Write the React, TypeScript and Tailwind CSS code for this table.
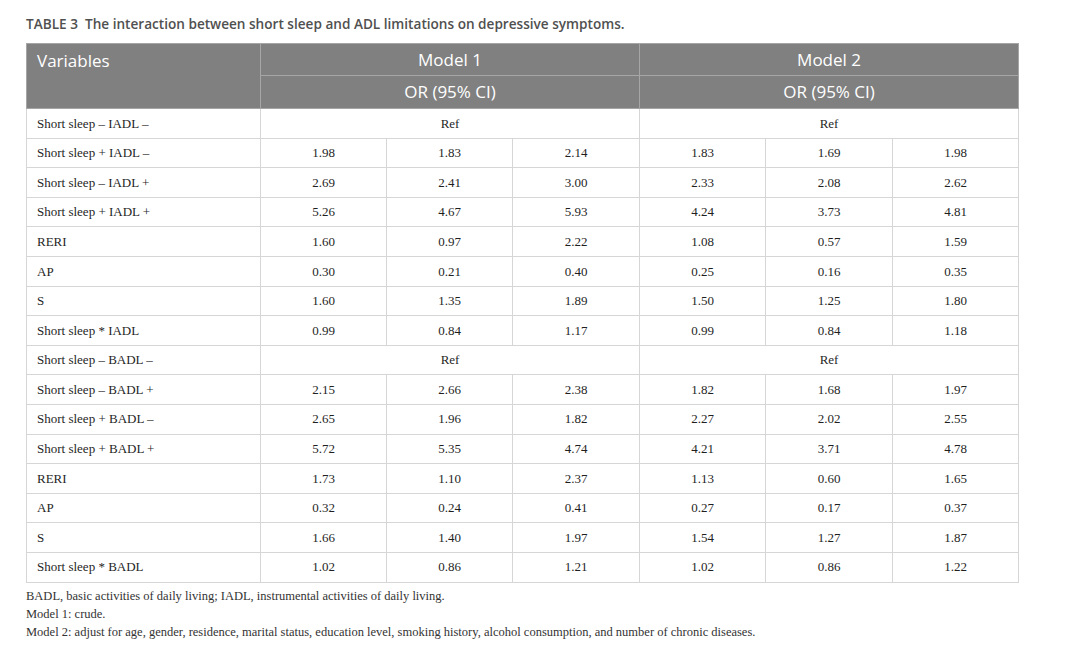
const rows: { label: string; ref?: boolean; m1?: string[]; m2?: string[] }[] = [
  { label: 'Short sleep – IADL –', ref: true },
  { label: 'Short sleep + IADL –', m1: ['1.98', '1.83', '2.14'], m2: ['1.83', '1.69', '1.98'] },
  { label: 'Short sleep – IADL +', m1: ['2.69', '2.41', '3.00'], m2: ['2.33', '2.08', '2.62'] },
  { label: 'Short sleep + IADL +', m1: ['5.26', '4.67', '5.93'], m2: ['4.24', '3.73', '4.81'] },
  { label: 'RERI', m1: ['1.60', '0.97', '2.22'], m2: ['1.08', '0.57', '1.59'] },
  { label: 'AP', m1: ['0.30', '0.21', '0.40'], m2: ['0.25', '0.16', '0.35'] },
  { label: 'S', m1: ['1.60', '1.35', '1.89'], m2: ['1.50', '1.25', '1.80'] },
  { label: 'Short sleep * IADL', m1: ['0.99', '0.84', '1.17'], m2: ['0.99', '0.84', '1.18'] },
  { label: 'Short sleep – BADL –', ref: true },
  { label: 'Short sleep – BADL +', m1: ['2.15', '2.66', '2.38'], m2: ['1.82', '1.68', '1.97'] },
  { label: 'Short sleep + BADL –', m1: ['2.65', '1.96', '1.82'], m2: ['2.27', '2.02', '2.55'] },
  { label: 'Short sleep + BADL +', m1: ['5.72', '5.35', '4.74'], m2: ['4.21', '3.71', '4.78'] },
  { label: 'RERI', m1: ['1.73', '1.10', '2.37'], m2: ['1.13', '0.60', '1.65'] },
  { label: 'AP', m1: ['0.32', '0.24', '0.41'], m2: ['0.27', '0.17', '0.37'] },
  { label: 'S', m1: ['1.66', '1.40', '1.97'], m2: ['1.54', '1.27', '1.87'] },
  { label: 'Short sleep * BADL', m1: ['1.02', '0.86', '1.21'], m2: ['1.02', '0.86', '1.22'] },
];

const serif = { fontFamily: '"Liberation Serif", "DejaVu Serif", serif' };

export default function App() {
  return (
    <div className="min-h-[647px] w-[1070px] bg-white pl-[26px] pt-[15px]">
      <h2 className="text-[13.6px] font-semibold text-[#505050] leading-[17px] font-['Open_Sans',sans-serif]">
        TABLE 3&nbsp; The interaction between short sleep and ADL limitations on depressive symptoms.
      </h2>

      <table className="mt-[11px] w-[992px] table-fixed border-collapse text-[13px] text-[#1f1f1f]" style={serif}>
        <colgroup>
          <col className="w-[234px]" />
          <col className="w-[126px]" />
          <col className="w-[126px]" />
          <col className="w-[127px]" />
          <col className="w-[126px]" />
          <col className="w-[127px]" />
          <col className="w-[126px]" />
        </colgroup>
        <thead className="bg-[#808080] text-white font-['Open_Sans',sans-serif] text-[17px]">
          <tr className="h-[32px]">
            <th rowSpan={2} className="border border-[#a6a6a6] px-[10px] text-left align-top pt-[4px] font-normal">
              Variables
            </th>
            <th colSpan={3} className="border border-[#a6a6a6] font-normal">Model 1</th>
            <th colSpan={3} className="border border-[#a6a6a6] font-normal">Model 2</th>
          </tr>
          <tr className="h-[33px]">
            <th colSpan={3} className="border border-[#a6a6a6] font-normal">OR (95% CI)</th>
            <th colSpan={3} className="border border-[#a6a6a6] font-normal">OR (95% CI)</th>
          </tr>
        </thead>
        <tbody>
          {rows.map((r, i) => (
            <tr key={i} className="h-[29.6px]">
              <td className="border border-[#d6d6d6] px-[10px]">{r.label}</td>
              {r.ref ? (
                <>
                  <td colSpan={3} className="border border-[#d6d6d6] text-center">Ref</td>
                  <td colSpan={3} className="border border-[#d6d6d6] text-center">Ref</td>
                </>
              ) : (
                [...(r.m1 ?? []), ...(r.m2 ?? [])].map((v, j) => (
                  <td key={j} className="border border-[#d6d6d6] text-center">{v}</td>
                ))
              )}
            </tr>
          ))}
        </tbody>
      </table>

      <div className="mt-[4px] text-[12.5px] leading-[18px] text-[#333]" style={serif}>
        <p>BADL, basic activities of daily living; IADL, instrumental activities of daily living.</p>
        <p>Model 1: crude.</p>
        <p>
          Model 2: adjust for age, gender, residence, marital status, education level, smoking history, alcohol
          consumption, and number of chronic diseases.
        </p>
      </div>
    </div>
  );
}
